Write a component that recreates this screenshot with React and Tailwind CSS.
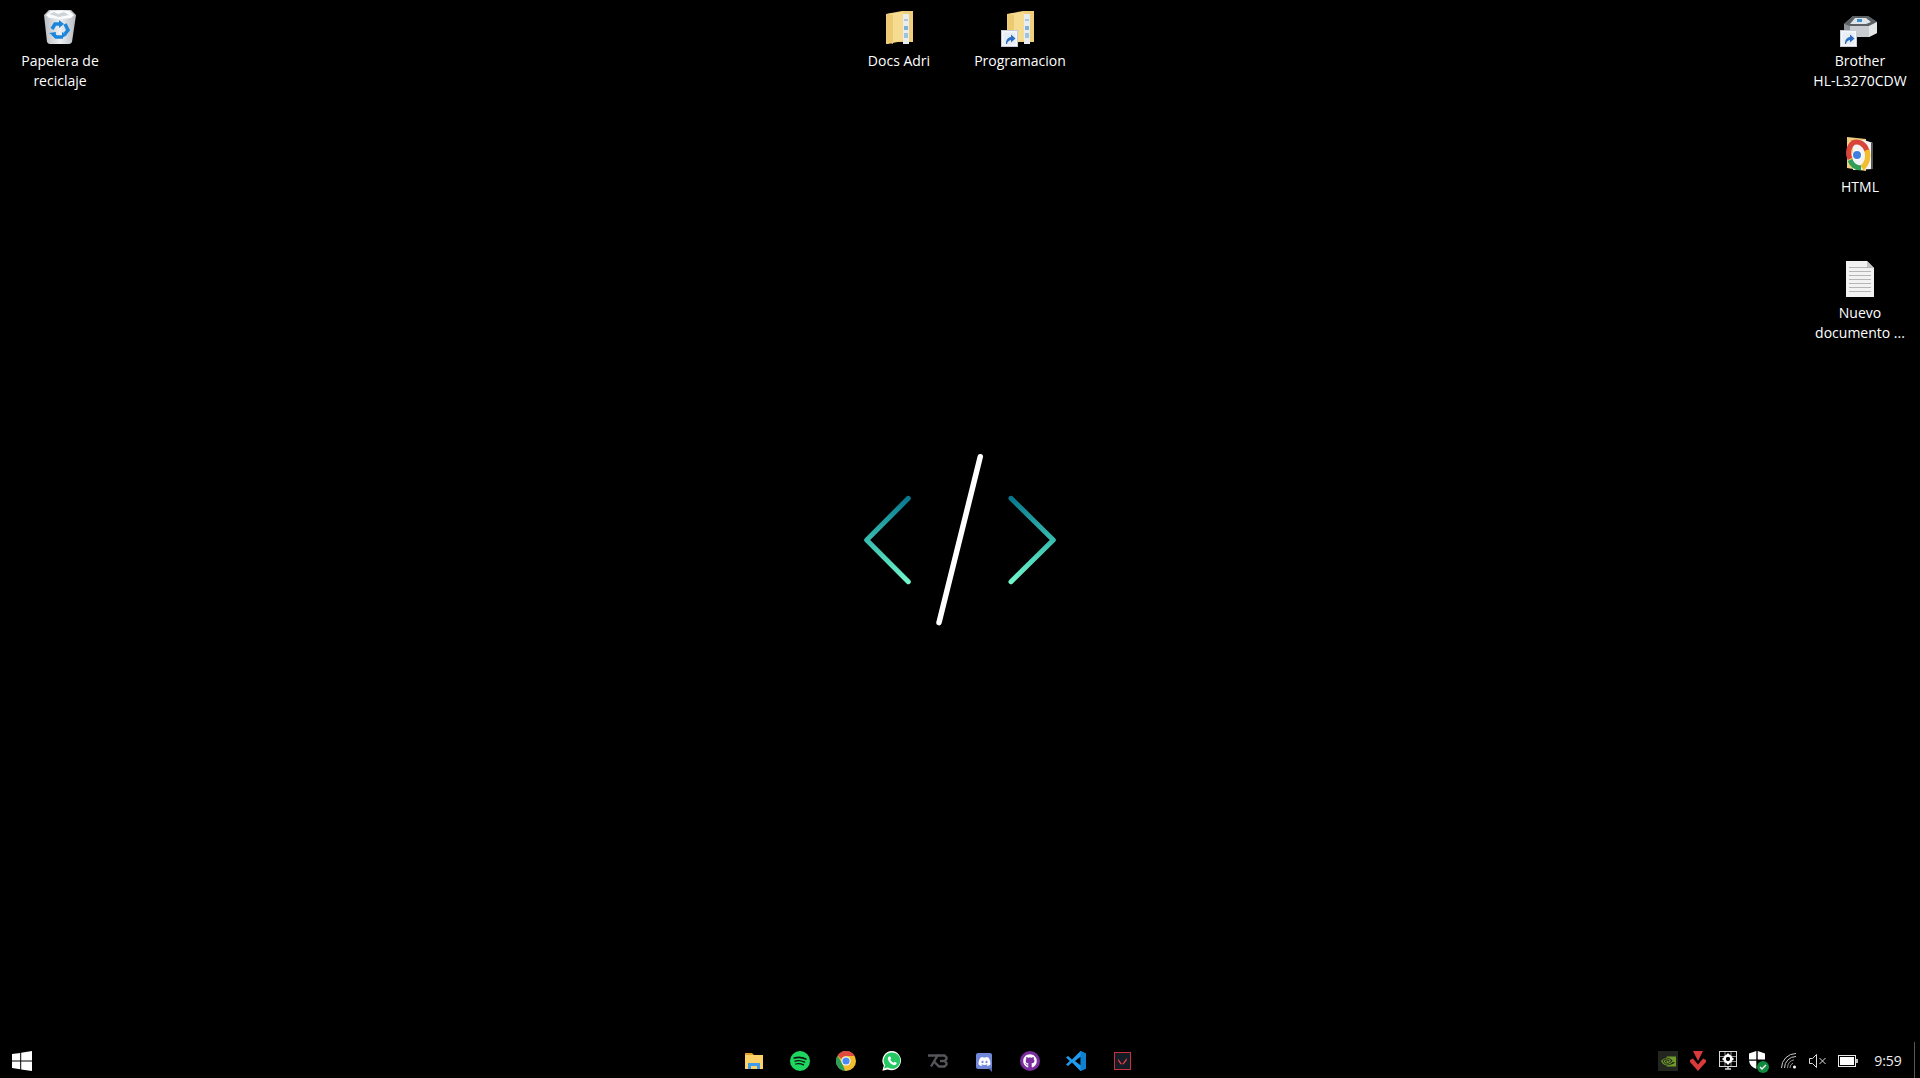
import { FaDiscord, FaGithub } from "react-icons/fa";
import { SiNvidia } from "react-icons/si";

const Shortcut = ({ x, y }) => (
  <g transform={`translate(${x} ${y})`}>
    <rect x="0.5" y="0.5" width="16" height="16" fill="#f4f7fb" stroke="#c5ccd6" />
    <rect x="2.5" y="2.5" width="12" height="12" fill="#e8eef6" />
    <path d="M5 14c0-4 1.5-6.5 5-7V4.5l4.5 4-4.5 4V10c-2 .3-3.5 1.500-4 4z" fill="#2a6fc4" />
  </g>
);

const Folder = ({ x = 11, shortcut }) => (
  <svg width="48" height="48" viewBox="0 0 48 48">
    <path d={`M${x} 12l16-3h11v31H${x + 12}l-12 2z`} fill="#f0cf7c" />
    <rect x={x + 17} y="12" width="6" height="30" fill="#e9edf0" />
    <rect x={x + 18} y="17" width="4" height="2" fill="#a9c7e0" />
    <rect x={x + 18} y="24" width="4" height="4" fill="#7fb2d6" />
    <rect x={x + 18} y="31" width="4" height="5" fill="#9cc4dd" />
    <path d={`M${x + 1} 12l15-2 1 1v27l-16 4z`} fill="#f6dc90" />
    <path d={`M${x + 1} 12l6 1v29l-6-2z`} fill="#ecca72" />
    {shortcut && <Shortcut x="5" y="28" />}
  </svg>
);

const RecycleBin = () => (
  <svg width="48" height="48" viewBox="1 0 48 48">
    <defs>
      <linearGradient id="bin" x1="0" y1="0" x2="1" y2="0">
        <stop offset="0" stopColor="#b9bec3" />
        <stop offset="0.5" stopColor="#eef0f2" />
        <stop offset="1" stopColor="#b5babf" />
      </linearGradient>
    </defs>
    <path d="M9 13l5-5h22l5 5-4 27q-1 2-3 2H15q-2 0-3-2z" fill="url(#bin)" />
    <path d="M11 13l5-4h18l5 4-3 3-11 1-11-1z" fill="#fbfcfd" />
    <path d="M14 12l5-2 4 2 6-2 5 3-10 2z" fill="#cfd3d7" />
    <g fill="none" stroke="#1b86dc" strokeWidth="3.500">
      <path d="M17 27l3-5h5" />
      <path d="M30 22l3 6-3 4" />
      <path d="M28 35h-7l-3-3" />
    </g>
    <path d="M24 18l5 4-5 4zM32 33l-5 3v-6zM14 31l7-1-1 5z" fill="#1b86dc" />
  </svg>
);

const Printer = () => (
  <svg width="48" height="48" viewBox="0 0 48 48">
    <path d="M8 22l9-8h15l9 6v11l-8 4H14l-6-5z" fill="#8d9297" />
    <path d="M8 22l9-8h15l9 6-8 4H14z" fill="#5b6064" />
    <path d="M19 16h11l5 4-5 2H14z" fill="#dfe6ea" />
    <path d="M21 17h5v3h-5z" fill="#3f8fc9" />
    <path d="M14 24h19v11H14z" fill="#c9cdd1" />
    <path d="M33 24l8-4v11l-8 4z" fill="#e4e6e8" />
    <Shortcut x="4" y="28" />
  </svg>
);

const ChromeFolder = () => (
  <svg width="48" height="48" viewBox="0 -1 48 48" fill="none">
    <path d="M11 8l19 2v32l-19-3z" fill="#f0cf7c" />
    <path d="M17 12l11-1 9 3v26l-20 1z" fill="#f4f4f4" />
    <path d="M37 14v26h-2V14z" fill="#555" />
    <path d="M16 14c7-3 13 1 15 8" stroke="#d9453a" strokeWidth="5" />
    <path d="M14 30c-3-6-1-13 3-16" stroke="#d9453a" strokeWidth="5" />
    <path d="M31 21c2 7 0 14-5 18" stroke="#f2bd2f" strokeWidth="5.500" />
    <path d="M14 31c2 5 6 8 11 8" stroke="#2f9e56" strokeWidth="5" />
    <circle cx="21" cy="26" r="5" fill="#fff" />
    <circle cx="21" cy="26" r="4" fill="#3f7fe0" />
  </svg>
);

const Doc = () => (
  <svg width="48" height="48" viewBox="0 -1 48 48">
    <path d="M10 6h21l7 7v29H10z" fill="#f2f2f2" />
    <path d="M31 6l7 7h-7z" fill="#c4c4c4" />
    {[12, 16, 20, 24, 28, 32, 36].map((y) => (
      <rect key={y} x="13" y={y} width="22" height="1" fill="#b5b5b5" />
    ))}
  </svg>
);

const desktopIcons = [
  { pos: "left-[11px] top-0", icon: <RecycleBin />, label: ["Papelera de", "reciclaje"] },
  { pos: "left-[850px] top-0", icon: <Folder />, label: ["Docs Adri"] },
  { pos: "left-[971px] top-0", icon: <Folder shortcut />, label: ["Programacion"] },
  { pos: "left-[1811px] top-0", icon: <Printer />, label: ["Brother", "HL-L3270CDW"] },
  { pos: "left-[1811px] top-[126px]", icon: <ChromeFolder />, label: ["HTML"] },
  { pos: "left-[1811px] top-[252px]", icon: <Doc />, label: ["Nuevo", "documento ..."] },
];

function DesktopIcon({ pos, icon, label }) {
  return (
    <div className={`absolute ${pos} w-[98px] pt-[2px] flex flex-col items-center text-white text-[14px] leading-[20px] text-center`}>
      <div className="mb-[1px]">{icon}</div>
      {label.map((l) => (
        <span key={l} className="whitespace-nowrap">{l}</span>
      ))}
    </div>
  );
}

const Logo = () => (
  <svg width="200" height="180" viewBox="860 449 200 180" fill="none" strokeLinecap="round" strokeLinejoin="round" strokeWidth="5">
    <defs>
      <linearGradient id="chev" gradientUnits="userSpaceOnUse" x1="0" y1="498" x2="0" y2="582">
        <stop offset="0" stopColor="#07788f" />
        <stop offset="0.5" stopColor="#38bcae" />
        <stop offset="1" stopColor="#70f7cb" />
      </linearGradient>
    </defs>
    <path d="M908.3 498.3L866.7 540L908.3 581.7" stroke="url(#chev)" />
    <path d="M1011 498.3L1053.3 540L1011 581.7" stroke="url(#chev)" />
    <path d="M980.3 456.7L939 622.7" stroke="#fff" strokeWidth="5.500" />
  </svg>
);

const WinLogo = () => (
  <svg width="20" height="20" viewBox="0 0 20 20" fill="#fff">
    <path d="M0 3l8.200-1.100v7.600H0zM9.200 1.700L20 0v9.500H9.200zM0 10.500h8.200v7.700L0 17zM9.200 10.500H20V20L9.200 18.400z" />
  </svg>
);

const Explorer = () => (
  <svg width="20" height="20" viewBox="0 0 20 20">
    <path d="M1 2h7l2 2H1z" fill="#d9a326" />
    <rect x="1" y="4" width="18" height="14" fill="#fcd268" />
    <path d="M4 18v-6h12v6h-3v-3H7v3z" fill="#3d9be9" />
  </svg>
);

const Spotify = () => (
  <svg width="20" height="20" viewBox="0 0 20 20" fill="none">
    <circle cx="10" cy="10" r="10" fill="#1ed760" />
    <g stroke="#111" strokeLinecap="round">
      <path d="M4.200 7c3.800-1 8-.8 11.600 1" strokeWidth="1.700" />
      <path d="M5 10.100c3.200-.8 6.600-.5 9.600 1" strokeWidth="1.400" />
      <path d="M5.600 13c2.700-.6 5.400-.4 7.900.9" strokeWidth="1.200" />
    </g>
  </svg>
);

const Chrome = () => (
  <svg width="20" height="20" viewBox="0 0 20 20">
    <circle cx="10" cy="10" r="10" fill="#f2bd2f" />
    <path d="M10 0a10 10 0 0 1 8.700 5H10a5 5 0 0 0-4.600 3L1.600 4.600A10 10 0 0 1 10 0z" fill="#de4b3e" />
    <path d="M1.600 4.600l4.400 7.700 3.200 7.700A10 10 0 0 1 1.600 4.600z" fill="#2a9d57" />
    <circle cx="10" cy="10" r="4.600" fill="#fff" />
    <circle cx="10" cy="10" r="3.600" fill="#4a8af4" />
  </svg>
);

const WhatsApp = () => (
  <svg width="20" height="20" viewBox="0 0 20 20">
    <path d="M10 0a9.600 9.600 0 0 0-8.200 14.600L.4 19.800l5.200-1.400A9.600 9.600 0 1 0 10 0z" fill="#fff" />
    <path d="M10 1.400a8.200 8.200 0 0 0-7 12.600l-.9 3.600 3.700-1A8.200 8.200 0 1 0 10 1.400z" fill="#25c862" />
    <path d="M7 5.500c-.8.400-1.400 1.500-1 2.900.7 2.500 3 4.900 5.500 5.600 1.300.4 2.600-.2 3-1.200l.2-1-2.200-1.100-1 1.100c-1.300-.5-2.700-1.900-3.200-3.200l.9-1-1-2.200z" fill="#fff" />
  </svg>
);

const SevenB = () => (
  <svg width="20" height="20" viewBox="0 0 20 20" fill="none" stroke="#55565a" strokeWidth="2.400">
    <path d="M0 4.500h9.500L6 10.500 3 15.500" />
    <path d="M6 10.500l5 5h5.500l2-2v-1.500l-2-2 2-2V6.500l-2-2H9.500" />
    <path d="M12 10h4" />
  </svg>
);

const Discord = () => (
  <div className="relative w-[16px] h-[16px] rounded-[2px] bg-[#7289da] flex items-center justify-center">
    <FaDiscord className="text-white text-[13px]" />
    <span className="absolute right-0 -bottom-[3px] w-0 h-0 border-t-[4px] border-t-[#5b6eae] border-l-[4px] border-l-transparent" />
  </div>
);

const Github = () => (
  <div className="w-[20px] h-[20px] rounded-full bg-[#7b2f9e] flex items-center justify-center">
    <FaGithub className="text-white text-[14px]" />
  </div>
);

const VSCode = () => (
  <svg width="20" height="20" viewBox="0 0 20 20">
    <path d="M14.500 0L20 2.500v15L14.500 20 6 11.500 2 15l-2-1.500L3.800 10 0 6.500 2 5l4 3.500z" fill="#1f9cf0" />
    <path d="M14.500 0L20 2.500v15L14.500 20z" fill="#0f7fd0" />
    <path d="M14.500 5.800L9 10l5.500 4.200z" fill="#000" />
  </svg>
);

const Valorant = () => (
  <div className="w-[17px] h-[18px] border border-[#c8303e] bg-[#141c26] flex items-center justify-center">
    <svg width="9" height="7" viewBox="0 0 11 9" fill="#e8404c">
      <path d="M0 1l5 7H3L0 4zM11 0v3L7 8H5z" />
    </svg>
  </div>
);

const taskIcons = [Explorer, Spotify, Chrome, WhatsApp, SevenB, Discord, Github, VSCode, Valorant];

const NvidiaTray = () => (
  <div className="w-[20px] h-[20px] bg-[#23261f] flex items-center justify-center">
    <SiNvidia className="text-[#6f9a2a] text-[15px]" />
  </div>
);

const RedV = () => (
  <svg width="16" height="20" viewBox="0 0 16 20" fill="#d93a3a">
    <path d="M3 0h10l-5 10z" />
    <path d="M0 9l3-1.500 5 6 5-6 3 1.500v2l-8 9-8-9z" />
  </svg>
);

const GearMonitor = () => (
  <svg width="18" height="20" viewBox="0 0 18 20" fill="none">
    <rect x="0.500" y="0.500" width="17" height="15" stroke="#d8d8d8" />
    <path d="M1 5.500h16M1 10.500h16M6 1v14M12 1v14" stroke="#8d8d8d" />
    <circle cx="9" cy="8" r="3.400" stroke="#fff" strokeWidth="2.500" />
    <path d="M9 2.500v2M9 11.500v2M3.500 8h2M12.500 8h2" stroke="#fff" strokeWidth="2" />
    <path d="M6 18h6M9 16v2" stroke="#d8d8d8" strokeWidth="1.500" />
  </svg>
);

const DefenderShield = () => (
  <div className="relative w-[20px] h-[20px]">
    <svg width="18" height="18" viewBox="0 0 18 18" fill="#fff">
      <path d="M8.300 0L1 2.500V8.500h7.300zM9.700 0L17 2.500V8.500H9.700zM1 9.800h7.300V18C4 16.500 1.500 13.500 1 9.800z" />
    </svg>
    <span className="absolute right-[-1px] bottom-[-2px] w-[12px] h-[12px] rounded-full bg-[#0f8a3c] flex items-center justify-center">
      <svg width="8" height="8" viewBox="0 0 8 8" fill="none" stroke="#fff" strokeWidth="1.300"><path d="M1 4l2 2 4-4" /></svg>
    </span>
  </div>
);

const Wifi = () => (
  <svg width="16" height="16" viewBox="0 0 16 16" fill="none" stroke="#c9c9c9" strokeWidth="1">
    <path d="M0.500 15A14.500 14.500 0 0 1 15 0.500" />
    <path d="M3.500 15A11.500 11.500 0 0 1 15 3.500" />
    <path d="M6.500 15A8.500 8.500 0 0 1 13 6.800" stroke="#8f8f8f" />
    <path d="M9 15A5.500 5.500 0 0 1 12 10" stroke="#8f8f8f" />
    <circle cx="13.500" cy="14" r="1.500" fill="#fff" stroke="none" />
  </svg>
);

const Muted = () => (
  <svg width="18" height="14" viewBox="0 0 18 14" fill="none" stroke="#dcdcdc">
    <path d="M0.500 4.500h3l4-4v13l-4-4h-3z" />
    <path d="M10.500 4l6 6M16.500 4l-6 6" />
  </svg>
);

const Battery = () => (
  <svg width="20" height="12" viewBox="0 0 20 12">
    <rect x="0.500" y="0.500" width="17" height="11" fill="none" stroke="#e8e8e8" />
    <rect x="2" y="2" width="14" height="8" fill="#fff" />
    <rect x="18" y="4" width="2" height="4" fill="#bbb" />
  </svg>
);

export default function App() {
  return (
    <div className="relative h-[1078px] w-[1920px] overflow-hidden bg-black flex flex-col font-['Open_Sans',sans-serif]">
      {desktopIcons.map((d) => (
        <DesktopIcon key={d.label[0]} {...d} />
      ))}
      <div className="absolute inset-0 flex items-center justify-center">
        <Logo />
      </div>

      <div className="relative mt-auto h-[34px] flex items-center text-white">
        <div className="w-[44px] flex justify-center"><WinLogo /></div>
        <div className="ml-[687px] flex">
          {taskIcons.map((Icon, i) => (
            <div key={i} className="w-[46px] flex items-center justify-center"><Icon /></div>
          ))}
        </div>
        <div className="ml-auto flex items-center">
          <div className="w-[30px] flex justify-center"><NvidiaTray /></div>
          <div className="w-[30px] flex justify-center"><RedV /></div>
          <div className="w-[30px] flex justify-center"><GearMonitor /></div>
          <div className="w-[30px] flex justify-center"><DefenderShield /></div>
          <div className="w-[31px] flex justify-center"><Wifi /></div>
          <div className="w-[28px] flex justify-center"><Muted /></div>
          <div className="w-[31px] flex justify-center"><Battery /></div>
          <span className="w-[50px] text-center text-[14px] leading-none text-[#eee]">9:59</span>
          <div className="ml-[1px] w-[6px] h-[36px] -mt-[2px] border-l border-[#555]" />
        </div>
      </div>
    </div>
  );
}
